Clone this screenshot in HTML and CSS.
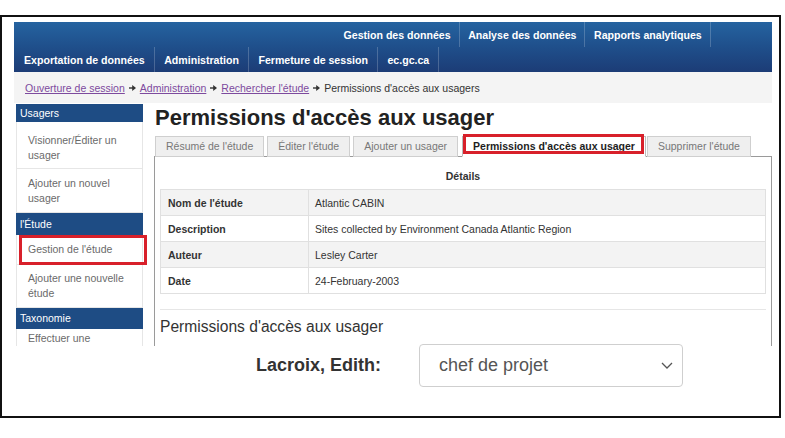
FILE: index.html
```html
<!DOCTYPE html>
<html lang="fr">
<head>
<meta charset="utf-8">
<title>Permissions d'accès aux usager</title>
<link rel="stylesheet" href="styles.css">
</head>
<body>
<div class="frame">
  <div class="shot">
    <header class="topnav">
      <nav class="navrow navrow-top">
        <a class="navitem">Gestion des données</a>
        <a class="navitem">Analyse des données</a>
        <a class="navitem">Rapports analytiques</a>
      </nav>
      <nav class="navrow">
        <a class="navitem navitem-first">Exportation de données</a>
        <a class="navitem">Administration</a>
        <a class="navitem">Fermeture de session</a>
        <a class="navitem">ec.gc.ca</a>
      </nav>
    </header>
    <div class="crumbs">
      <a class="crumb-link">Ouverture de session</a>
      <svg class="crumb-arrow" width="7" height="6" viewBox="0 0 7 6"><path d="M0 3H4" stroke="#333" stroke-width="1.4"/><polygon points="3.2,0 7,3 3.2,6" fill="#333"/></svg>
      <a class="crumb-link">Administration</a>
      <svg class="crumb-arrow" width="7" height="6" viewBox="0 0 7 6"><path d="M0 3H4" stroke="#333" stroke-width="1.4"/><polygon points="3.2,0 7,3 3.2,6" fill="#333"/></svg>
      <a class="crumb-link">Rechercher l'étude</a>
      <svg class="crumb-arrow" width="7" height="6" viewBox="0 0 7 6"><path d="M0 3H4" stroke="#333" stroke-width="1.4"/><polygon points="3.2,0 7,3 3.2,6" fill="#333"/></svg>
      <span class="crumb-current">Permissions d'accès aux usagers</span>
    </div>
    <div class="layout">
      <aside class="sidebar">
        <div class="side-head side-head-first">Usagers</div>
        <div class="side-item side-item-first">Visionner/Éditer un usager</div>
        <div class="side-item">Ajouter un nouvel usager</div>
        <div class="side-head side-head-etude">l'Étude</div>
        <div class="side-item side-item-single side-item-marked">Gestion de l'étude</div>
        <div class="side-item side-item-tight">Ajouter une nouvelle étude</div>
        <div class="side-head">Taxonomie</div>
        <div class="side-item side-item-last">Effectuer une</div>
      </aside>
      <main class="main">
        <h1 class="title">Permissions d'accès aux usager</h1>
        <ul class="tabs">
          <li class="tab">Résumé de l'étude</li>
          <li class="tab">Éditer l'étude</li>
          <li class="tab">Ajouter un usager</li>
          <li class="tab tab-active">Permissions d'accès aux usager</li>
          <li class="tab">Supprimer l'étude</li>
        </ul>
        <div class="panel">
          <div class="caption">Détails</div>
          <table class="details">
            <tr class="row-odd"><td class="label">Nom de l'étude</td><td class="value">Atlantic CABIN</td></tr>
            <tr><td class="label">Description</td><td class="value">Sites collected by Environment Canada Atlantic Region</td></tr>
            <tr class="row-odd"><td class="label">Auteur</td><td class="value">Lesley Carter</td></tr>
            <tr><td class="label">Date</td><td class="value">24-February-2003</td></tr>
          </table>
          <hr class="sep">
          <h2 class="subtitle">Permissions d'accès aux usager</h2>
        </div>
      </main>
    </div>
  </div>
  <div class="zoomrow">
    <span class="zoom-label">Lacroix, Edith:</span>
    <div class="select">
      <span class="select-text">chef de projet</span>
      <svg class="chevron" width="12" height="7" viewBox="0 0 12 7"><polyline points="1,1 6,6 11,1" fill="none" stroke="#555" stroke-width="1.3"/></svg>
    </div>
  </div>
</div>
</body>
</html>
```
FILE: styles.css
```css
*, *::before, *::after { box-sizing: border-box; }

html, body {
  margin: 0;
  padding: 0;
  background: #fff;
}

body {
  font-family: "Liberation Sans", Arial, sans-serif;
  color: #333;
}

.frame {
  margin-top: 15px;
  width: 781px;
  height: 403px;
  border: 2px solid #111;
  background: #fff;
}

.shot {
  margin: 5px 0 0 12px;
  width: 758px;
  height: 324px;
  overflow: hidden;
  background: #fff;
}

/* ---------- top navigation ---------- */
.topnav {
  height: 50px;
  background: linear-gradient(to bottom, #2563a0 0%, #1f4f8b 50%, #1c3c76 100%);
}

.navrow {
  display: flex;
  height: 25px;
}

.navrow-top {
  height: 25px;
  padding-left: 321px;
}

.navrow-top .navitem {
  padding: 0 8px 0 8.5px;
}

.navitem {
  display: flex;
  align-items: center;
  padding: 0 9px 0 9.5px;
  border-right: 1px solid rgba(255, 255, 255, 0.2);
  color: #fff;
  font-weight: bold;
  font-size: 10.6px;
  white-space: nowrap;
}

.navitem-first {
  padding-left: 10px;
}

/* ---------- breadcrumb ---------- */
.crumbs {
  height: 31px;
  display: flex;
  align-items: center;
  padding-left: 11px;
  background: #f4f4f4;
  font-size: 10.5px;
  color: #333;
}

.crumb-link {
  color: #7d4a9e;
  text-decoration: underline;
}

.crumb-arrow {
  margin: 0 4px 0 4px;
}

.crumb-current {
  color: #333;
}

/* ---------- layout ---------- */
.layout {
  display: flex;
  margin-top: 1px;
  gap: 11px;
  padding-left: 2px;
}

.sidebar {
  width: 127px;
  flex: none;
  font-size: 10.5px;
}

.side-head {
  height: 21px;
  line-height: 21px;
  padding-left: 4px;
  background: #1e4c84;
  color: #fff;
}

.side-head-first {
  height: 18px;
  line-height: 18px;
}

.side-head-etude {
  height: 22px;
  line-height: 22px;
}

.side-item {
  position: relative;
  padding: 7px 10px 6px 11px;
  line-height: 15px;
  color: #6a6a6a;
  border-left: 1px solid #e6e6e6;
  border-right: 1px solid #e6e6e6;
  border-bottom: 1px solid #e6e6e6;
}

.side-item-first {
  padding-top: 11px;
  padding-bottom: 5px;
}

.side-item-single {
  padding-top: 7px;
  padding-bottom: 7px;
}

.side-item-tight {
  padding-top: 6px;
  padding-bottom: 6px;
}

.side-item-last {
  padding-top: 2px;
  line-height: 14px;
}

.side-item-marked::after {
  content: "";
  position: absolute;
  left: 2px;
  top: 0;
  width: 128px;
  height: 30px;
  border: 3px solid #d8202a;
}

/* ---------- main ---------- */
.main {
  flex: 1;
  min-width: 0;
}

.title {
  margin: 1px 0 0 1px;
  font-size: 22px;
  line-height: 26px;
  font-weight: bold;
  color: #222;
}

.tabs {
  display: flex;
  list-style: none;
  margin: 5px 0 -1px 1px;
  padding: 0;
  position: relative;
  z-index: 1;
}

.tab {
  position: relative;
  height: 21px;
  line-height: 19px;
  padding: 0 10px;
  margin-right: 3px;
  border: 1px solid #cfcfcf;
  background: #efefef;
  color: #777;
  font-size: 10.5px;
  white-space: nowrap;
}

.tab-active {
  margin-left: 1px;
  margin-right: 1px;
  background: #fff;
  border-color: #bbb;
  border-bottom-color: #fff;
  color: #1e1e1e;
  font-weight: bold;
}

.tab-active::after {
  content: "";
  position: absolute;
  left: 0;
  right: 1px;
  top: -3px;
  bottom: 2px;
  border: 3px solid #d8202a;
}

.panel {
  min-height: 300px;
  border: 1px solid #9a9a9a;
  border-bottom: none;
  padding: 0 5px;
}

.caption {
  padding-top: 9px;
  line-height: 20px;
  margin-bottom: 3px;
  text-align: center;
  font-weight: bold;
  font-size: 10.5px;
  color: #333;
}

.details {
  width: 100%;
  border-collapse: collapse;
  border: 1px solid #e0e0e0;
  font-size: 10.5px;
  color: #333;
}

.details td {
  height: 26px;
  border-top: 1px solid #e0e0e0;
  padding: 0 6px;
}

.details .label {
  width: 148px;
  padding-left: 7px;
  font-weight: bold;
  border-right: 1px solid #e0e0e0;
}

.row-odd td {
  background: #f3f3f3;
}

.sep {
  margin: 15px 0 0;
  border: none;
  border-top: 1px solid #e6e6e6;
  height: 0;
}

.subtitle {
  margin: 7px 0 0 0;
  font-size: 15.6px;
  line-height: 20px;
  font-weight: normal;
  color: #333;
}

/* ---------- zoomed-in detail ---------- */
.zoomrow {
  position: relative;
  margin-top: -2px;
  display: flex;
  align-items: center;
  padding-left: 254px;
  gap: 38px;
}

.zoom-label {
  font-size: 18px;
  font-weight: bold;
  color: #333;
  white-space: nowrap;
}

.select {
  width: 264px;
  height: 43px;
  display: flex;
  align-items: center;
  justify-content: space-between;
  padding: 0 9px 0 19px;
  border: 1px solid #cfcfcf;
  border-radius: 4px;
  background: #fff;
  font-size: 18px;
  color: #555;
}
```
